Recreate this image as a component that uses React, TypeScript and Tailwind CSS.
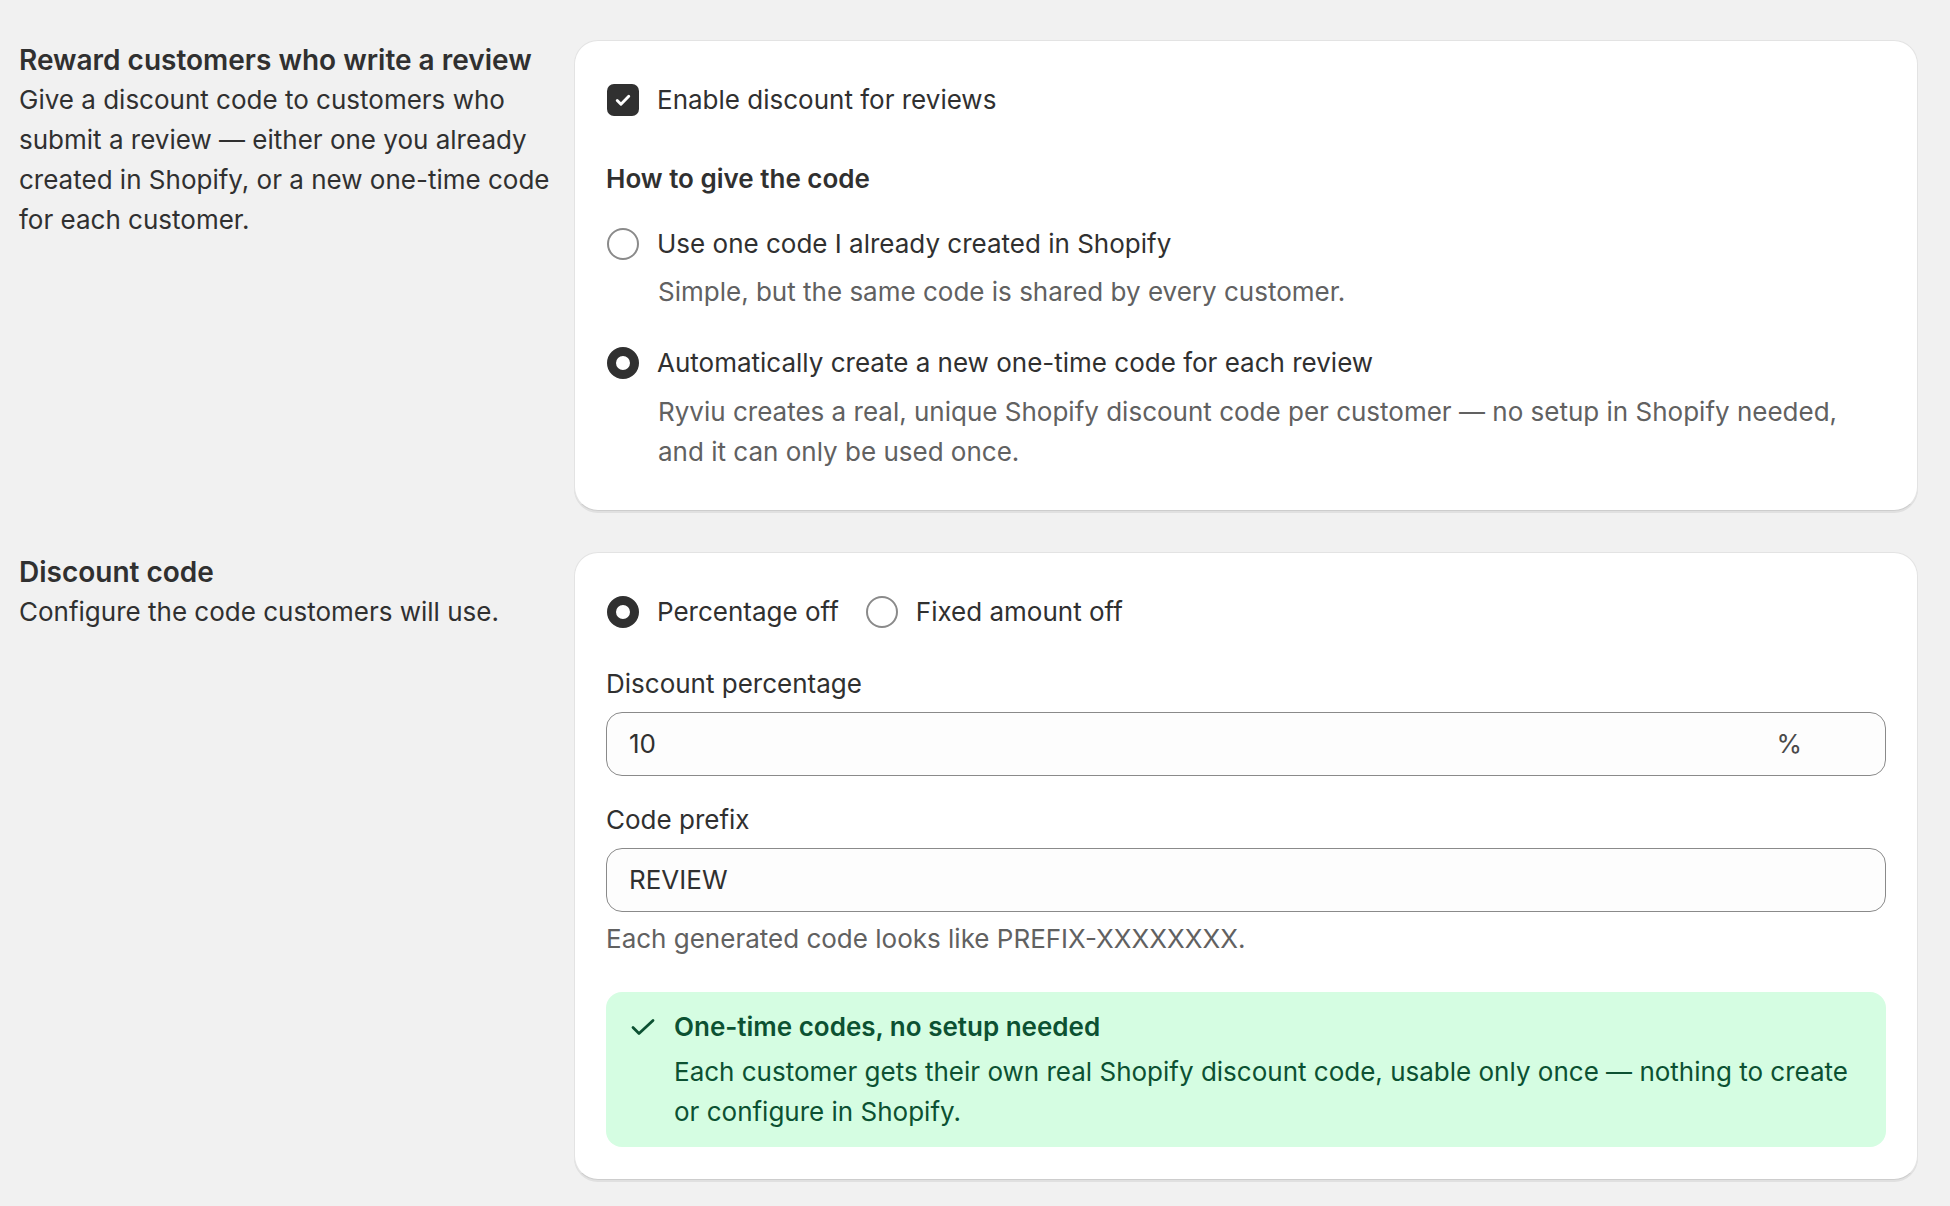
import { useState } from "react";

type RadioProps = {
  checked: boolean;
  onSelect: () => void;
  label: string;
};

function Radio({ checked, onSelect, label }: RadioProps) {
  return (
    <button
      type="button"
      onClick={onSelect}
      className="flex h-[40px] items-center gap-[18px] pl-[1px] text-left"
    >
      <span
        className={
          checked
            ? "box-border h-[32px] w-[32px] shrink-0 rounded-full border-[9px] border-[#303030] bg-white"
            : "box-border h-[32px] w-[32px] shrink-0 rounded-full border-[2px] border-[#8a8a8a] bg-white"
        }
      />
      <span>{label}</span>
    </button>
  );
}

function Card({ children, className }: { children: React.ReactNode; className?: string }) {
  return (
    <div
      className={
        "rounded-[24px] border border-[#e3e3e3] border-b-[#cdcdcd] bg-white px-[31px] shadow-[0_2px_0_rgba(0,0,0,0.07)] " +
        (className ?? "")
      }
    >
      {children}
    </div>
  );
}

export default function App() {
  const [enabled, setEnabled] = useState(true);
  const [mode, setMode] = useState<"existing" | "auto">("auto");
  const [kind, setKind] = useState<"percentage" | "fixed">("percentage");
  const [amount, setAmount] = useState("10");
  const [prefix, setPrefix] = useState("REVIEW");

  return (
    <div className="min-h-screen bg-[#f1f1f1] pl-[19px] pr-[32px] pt-[40px] font-['Inter',sans-serif] text-[26px] leading-[40px] text-[#303030]">
      <div className="flex flex-col gap-[41px]">
        <section className="grid grid-cols-[535px_1fr] gap-[20px]">
          <div>
            <h2 className="text-[28px] font-semibold leading-[40px]">
              Reward customers who write a review
            </h2>
            <p>
              Give a discount code to customers who submit a review — either one
              you already created in Shopify, or a new one-time code for each
              customer.
            </p>
          </div>

          <Card className="pt-[39px] pb-[38px]">
            <button
              type="button"
              onClick={() => setEnabled(!enabled)}
              className="flex h-[40px] items-center gap-[18px] pl-[1px] text-left"
            >
              <span
                className={
                  enabled
                    ? "flex h-[32px] w-[32px] shrink-0 items-center justify-center rounded-[7px] bg-[#303030]"
                    : "flex h-[32px] w-[32px] shrink-0 items-center justify-center rounded-[7px] border-2 border-[#8a8a8a] bg-white"
                }
              >
                {enabled && (
                  <svg viewBox="0 0 20 20" className="h-[24px] w-[24px]" fill="none">
                    <path
                      d="M5.2 10.4l3.1 3.1L14.8 6.8"
                      stroke="white"
                      strokeWidth="2.4"
                      strokeLinecap="round"
                      strokeLinejoin="round"
                    />
                  </svg>
                )}
              </span>
              <span>Enable discount for reviews</span>
            </button>

            <h3 className="mt-[39px] font-semibold">How to give the code</h3>

            <div className="mt-[25px]">
              <Radio
                checked={mode === "existing"}
                onSelect={() => setMode("existing")}
                label="Use one code I already created in Shopify"
              />
              <p className="mt-[8px] pl-[52px] text-[#616161]">
                Simple, but the same code is shared by every customer.
              </p>
            </div>

            <div className="mt-[31px]">
              <Radio
                checked={mode === "auto"}
                onSelect={() => setMode("auto")}
                label="Automatically create a new one-time code for each review"
              />
              <p className="mt-[9px] pl-[52px] text-[#616161]">
                Ryviu creates a real, unique Shopify discount code per customer — no
                setup in Shopify needed, and it can only be used once.
              </p>
            </div>
          </Card>
        </section>

        <section className="grid grid-cols-[535px_1fr] gap-[20px]">
          <div>
            <h2 className="text-[28px] font-semibold leading-[40px]">Discount code</h2>
            <p>Configure the code customers will use.</p>
          </div>

          <Card className="pt-[39px] pb-[32px]">
            <div className="flex items-center gap-[26px]">
              <Radio
                checked={kind === "percentage"}
                onSelect={() => setKind("percentage")}
                label="Percentage off"
              />
              <Radio
                checked={kind === "fixed"}
                onSelect={() => setKind("fixed")}
                label="Fixed amount off"
              />
            </div>

            <label className="mt-[32px] block">Discount percentage</label>
            <div className="mt-[8px] flex h-[64px] items-center rounded-[16px] border border-[#8a8a8a] bg-[#fdfdfd] pl-[22px] pr-[83px]">
              <input
                value={amount}
                onChange={(e) => setAmount(e.target.value)}
                className="min-w-0 flex-1 bg-transparent outline-none"
              />
              <span className="text-[#4a4a4a]">%</span>
            </div>

            <label className="mt-[24px] block">Code prefix</label>
            <div className="mt-[8px] flex h-[64px] items-center rounded-[16px] border border-[#8a8a8a] bg-[#fdfdfd] px-[22px]">
              <input
                value={prefix}
                onChange={(e) => setPrefix(e.target.value)}
                className="min-w-0 flex-1 bg-transparent outline-none"
              />
            </div>
            <p className="mt-[7px] text-[#616161]">
              Each generated code looks like PREFIX-XXXXXXXX.
            </p>

            <div className="mt-[33px] flex gap-[18px] rounded-[16px] bg-[#d5fde2] pb-[15px] pl-[24px] pr-[24px] pt-[15px] text-[#0c5132]">
              <svg viewBox="0 0 26 26" className="mt-[7px] h-[26px] w-[26px] shrink-0" fill="none">
                <path
                  d="M3 13.5l6 6L23 6.5"
                  stroke="#0c5132"
                  strokeWidth="2.8"
                  strokeLinecap="round"
                  strokeLinejoin="round"
                />
              </svg>
              <div>
                <p className="font-semibold">One-time codes, no setup needed</p>
                <p className="mt-[5px]">
                  Each customer gets their own real Shopify discount code, usable only
                  once — nothing to create or configure in Shopify.
                </p>
              </div>
            </div>
          </Card>
        </section>
      </div>
    </div>
  );
}
